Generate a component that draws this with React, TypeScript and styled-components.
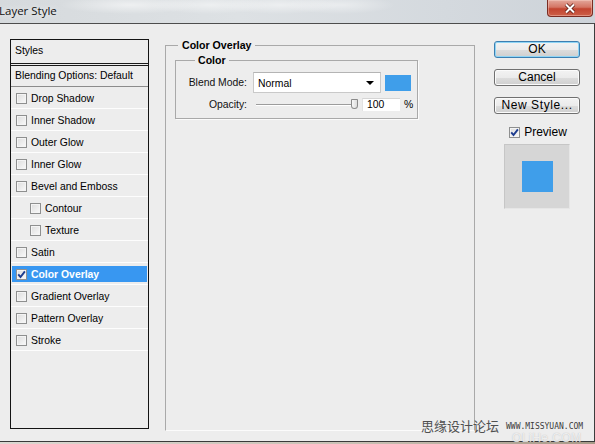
import React from 'react';
import styled, { createGlobalStyle } from 'styled-components';

interface StyleItem {
  label: string;
  indent?: boolean;
  checked?: boolean;
  active?: boolean;
}

const styleItems: StyleItem[] = [
  { label: 'Drop Shadow' },
  { label: 'Inner Shadow' },
  { label: 'Outer Glow' },
  { label: 'Inner Glow' },
  { label: 'Bevel and Emboss' },
  { label: 'Contour', indent: true },
  { label: 'Texture', indent: true },
  { label: 'Satin' },
  { label: 'Color Overlay', checked: true, active: true },
  { label: 'Gradient Overlay' },
  { label: 'Pattern Overlay' },
  { label: 'Stroke' },
];

const OVERLAY_BLUE = '#3f9eea';

const CheckBox: React.FC<{ checked?: boolean }> = ({ checked }) => (
  <Box>
    {checked && (
      <svg width="9" height="9" viewBox="0 0 9 9">
        <path d="M1.2 4.4 L3.5 7 L7.9 1.4" fill="none" stroke="#1d3c8f" strokeWidth="1.9" />
      </svg>
    )}
  </Box>
);

const App: React.FC = () => {
  return (
    <>
      <GlobalStyle />
      <Window>
        <TitleBar>
          <Title>Layer Style</Title>
          <CloseButton>
            <svg width="14" height="11" viewBox="0 0 14 11">
              <path d="M3 1.5 L11 9.5 M11 1.5 L3 9.5" stroke="#5a1a12" strokeWidth="3.6" />
              <path d="M3 1.5 L11 9.5 M11 1.5 L3 9.5" stroke="#ffffff" strokeWidth="2" />
            </svg>
          </CloseButton>
        </TitleBar>

        <Body>
          <StyleList>
            <ListHeader>Styles</ListHeader>
            <BlendRow>Blending Options: Default</BlendRow>
            {styleItems.map(item => (
              <Row key={item.label}>
                <RowInner $active={item.active} $indent={item.indent}>
                  <CheckBox checked={item.checked} />
                  <RowLabel $active={item.active}>{item.label}</RowLabel>
                </RowInner>
              </Row>
            ))}
          </StyleList>

          <OuterGroup>
            <GroupLegend $offset={12} $pad={4}>Color Overlay</GroupLegend>
            <InnerGroup>
              <GroupLegend $offset={14} $pad={3}>Color</GroupLegend>
              <FieldRow>
                <FieldLabel>Blend Mode:</FieldLabel>
                <Select>
                  <span>Normal</span>
                  <Arrow />
                </Select>
                <Swatch />
              </FieldRow>
              <FieldRow $top={5}>
                <FieldLabel>Opacity:</FieldLabel>
                <Slider>
                  <Track />
                  <Thumb />
                </Slider>
                <NumberBox>100</NumberBox>
                <Unit>%</Unit>
              </FieldRow>
            </InnerGroup>
          </OuterGroup>

          <ButtonColumn>
            <Button $primary>OK</Button>
            <Button>Cancel</Button>
            <Button>New Style...</Button>
            <PreviewToggle>
              <CheckBox checked />
              <span>Preview</span>
            </PreviewToggle>
            <PreviewBox>
              <PreviewSquare />
            </PreviewBox>
          </ButtonColumn>
        </Body>
        <BottomEdge />

        <Watermark>
          <CnMark>思缘设计论坛</CnMark>
          <SiteMark>WWW.MISSYUAN.COM</SiteMark>
        </Watermark>
        <FaintMark>OLiHe.COM</FaintMark>
      </Window>
    </>
  );
};

export default App;

const GlobalStyle = createGlobalStyle`
  html, body {
    margin: 0;
    padding: 0;
    background: #ededed;
  }
  * {
    box-sizing: border-box;
  }
`;

const Window = styled.div`
  position: relative;
  width: 595px;
  height: 444px;
  overflow: hidden;
  display: flex;
  flex-direction: column;
  font-family: 'Liberation Sans', Arial, sans-serif;
  color: #000;
  background: #b9b2a8;
`;

const TitleBar = styled.div`
  height: 23px;
  display: flex;
  align-items: flex-start;
  background:
    radial-gradient(ellipse 70px 9px at 130px 5px, rgba(255, 255, 255, 0.55), transparent),
    radial-gradient(ellipse 60px 9px at 210px 5px, rgba(255, 255, 255, 0.5), transparent),
    radial-gradient(ellipse 60px 9px at 280px 5px, rgba(255, 255, 255, 0.5), transparent),
    radial-gradient(ellipse 55px 9px at 340px 5px, rgba(255, 255, 255, 0.45), transparent),
    linear-gradient(90deg, #d6dadd 0%, #dde1e4 40%, #d4d9de 75%, #cdd3d9 100%);
`;

const Title = styled.span`
  margin: 4px 0 0 -1px;
  font-family: 'Open Sans', 'Liberation Sans', sans-serif;
  font-size: 11.5px;
  line-height: 14px;
  color: #111;
  text-shadow: 0 0 6px rgba(255, 255, 255, 0.9);
`;

const CloseButton = styled.div`
  margin-left: auto;
  margin-right: 2px;
  width: 46px;
  height: 17px;
  display: flex;
  align-items: center;
  justify-content: center;
  border: 1px solid #7a2c22;
  border-top: none;
  border-radius: 0 0 4px 4px;
  background: linear-gradient(#e3a79b 0%, #d47564 45%, #c24430 55%, #cc6048 100%);
  box-shadow: inset 0 0 0 1px rgba(255, 220, 210, 0.4);
`;

const Body = styled.div`
  height: 419px;
  display: flex;
  align-items: flex-start;
  padding: 15px 0 0 10px;
  background: #ededed;
  border-top: 1px solid #4d4d4d;
  border-right: 1px solid #3c3c3c;
  border-bottom: 1px solid #3a3a3a;
`;

const BottomEdge = styled.div`
  flex: 1;
  background: linear-gradient(90deg, #dcd8d2, #c8c0b4 60%, #a89a88);
`;

const StyleList = styled.div`
  width: 139px;
  height: 390px;
  border: 1px solid #141414;
  display: flex;
  flex-direction: column;
  font-size: 10.4px;
`;

const ListHeader = styled.div`
  height: 26px;
  padding: 5px 0 0 4px;
  border-bottom: 3px double #1a1a1a;
`;

const BlendRow = styled.div`
  height: 21px;
  padding: 4px 0 0 4px;
  border-bottom: 1px solid #8c8c8c;
`;

const Row = styled.div`
  height: 22px;
  padding: 3px 1px 2px;
  border-bottom: 1px solid #fdfdfd;
`;

const RowInner = styled.div<{ $active?: boolean; $indent?: boolean }>`
  height: 16px;
  display: flex;
  align-items: center;
  gap: 4px;
  padding-left: ${({ $indent }) => ($indent ? '18px' : '4px')};
  background: ${({ $active }) => ($active ? '#3897f1' : 'transparent')};
`;

const RowLabel = styled.span<{ $active?: boolean }>`
  color: ${({ $active }) => ($active ? '#fff' : '#000')};
  font-weight: ${({ $active }) => ($active ? 'bold' : 'normal')};
`;

const Box = styled.span`
  width: 11px;
  height: 11px;
  flex: none;
  display: flex;
  align-items: center;
  justify-content: center;
  border: 1px solid #8e8f8f;
  background: linear-gradient(135deg, #dcdcdc, #fafafa);
  box-shadow: inset 0 0 0 1px #f4f4f4;
`;

const OuterGroup = styled.fieldset`
  margin: 0 0 0 16px;
  padding: 0;
  min-width: 0;
  width: 310px;
  height: 392px;
  border: 1px solid #a9a9a9;
  border-bottom-color: #fbfbfb;
`;

const InnerGroup = styled.fieldset`
  margin: 3px 0 0 9px;
  padding: 6px 0 7px 5px;
  min-width: 0;
  width: 243px;
  border: 1px solid #a9a9a9;
  box-shadow: 1px 1px 0 #fbfbfb;
`;

const GroupLegend = styled.legend<{ $offset: number; $pad: number }>`
  margin-left: ${({ $offset }) => $offset}px;
  padding: 0 ${({ $pad }) => $pad}px;
  font-size: 10.6px;
  font-weight: bold;
  line-height: 12px;
`;

const FieldRow = styled.div<{ $top?: number }>`
  display: flex;
  align-items: center;
  margin-top: ${({ $top }) => $top ?? 0}px;
  font-size: 10.4px;
`;

const FieldLabel = styled.span`
  width: 66px;
  margin-right: 6px;
  text-align: right;
  color: #111;
`;

const Select = styled.div`
  width: 128px;
  height: 21px;
  display: flex;
  align-items: center;
  justify-content: space-between;
  padding: 1px 6px 0 4px;
  background: #fff;
  border: 1px solid #c9c9c9;
  border-top-color: #b4b4b4;
`;

const Arrow = styled.span`
  width: 0;
  height: 0;
  border-left: 4px solid transparent;
  border-right: 4px solid transparent;
  border-top: 4px solid #000;
`;

const Swatch = styled.div`
  width: 26px;
  height: 16px;
  margin-left: 4px;
  background: ${OVERLAY_BLUE};
`;

const Slider = styled.div`
  position: relative;
  width: 106px;
  height: 13px;
  display: flex;
  align-items: center;
`;

const Track = styled.div`
  margin-left: 3px;
  width: 96px;
  height: 2px;
  border-top: 1px solid #9c9c9c;
  border-bottom: 1px solid #ffffff;
`;

const Thumb = styled.div`
  position: absolute;
  left: 98px;
  top: 1px;
  width: 7px;
  height: 10px;
  border: 1px solid #8a8a8a;
  border-radius: 1px 1px 4px 4px;
  background: linear-gradient(90deg, #f8f8f8, #dcdcdc);
`;

const NumberBox = styled.div`
  width: 38px;
  height: 13px;
  margin-left: 3px;
  padding: 0 0 0 4px;
  line-height: 12px;
  background: #fff;
  border-top: 1px solid #d5d5d5;
  border-left: 1px solid #e2e2e2;
`;

const Unit = styled.span`
  margin-left: 4px;
`;

const ButtonColumn = styled.div`
  margin: 2px 0 0 19px;
  width: 86px;
  display: flex;
  flex-direction: column;
  align-items: center;
`;

const Button = styled.button<{ $primary?: boolean }>`
  width: 86px;
  height: 17px;
  margin-bottom: 11px;
  padding: 0;
  font-family: 'Liberation Sans', Arial, sans-serif;
  font-size: 12px;
  line-height: 15px;
  color: #000;
  border: 1px solid ${({ $primary }) => ($primary ? '#3c7fb1' : '#707070')};
  border-radius: 3px;
  background: linear-gradient(#f3f3f3 0%, #ebebeb 50%, #dddddd 51%, #cfcfcf 100%);
  box-shadow: inset 0 0 0 1px ${({ $primary }) => ($primary ? '#8fd5f5' : '#fbfbfb')};

  &:nth-of-type(3) {
    letter-spacing: 0.6px;
    margin-bottom: 12px;
  }
`;

const PreviewToggle = styled.label`
  display: flex;
  align-items: center;
  gap: 4px;
  height: 12px;
  font-size: 12px;
  margin-left: 2px;
`;

const PreviewBox = styled.div`
  margin-top: 6px;
  width: 66px;
  height: 65px;
  display: flex;
  align-items: center;
  justify-content: center;
  background: #d6d6d6;
  border: 1px solid #c6c6c6;
  border-right-color: #e6e6e6;
  border-bottom-color: #e6e6e6;
`;

const PreviewSquare = styled.div`
  width: 31px;
  height: 31px;
  background: ${OVERLAY_BLUE};
`;

const Watermark = styled.div`
  position: absolute;
  left: 421px;
  top: 418px;
  display: flex;
  align-items: center;
  gap: 7px;
  color: #4a4a4a;
`;

const CnMark = styled.span`
  font-family: 'Noto Sans CJK SC', sans-serif;
  font-size: 13px;
  line-height: 16px;
  color: #505050;
`;

const SiteMark = styled.span`
  font-family: 'DejaVu Sans Mono', monospace;
  font-size: 8px;
  letter-spacing: 0;
  color: #3a3a3a;
`;

const FaintMark = styled.div`
  position: absolute;
  left: 512px;
  top: 433px;
  font-family: 'Liberation Sans', Arial, sans-serif;
  font-size: 12px;
  line-height: 11px;
  letter-spacing: 0.5px;
  color: rgba(255, 255, 255, 0.75);
  text-shadow: 0 0 1px rgba(120, 120, 120, 0.5);
`;
